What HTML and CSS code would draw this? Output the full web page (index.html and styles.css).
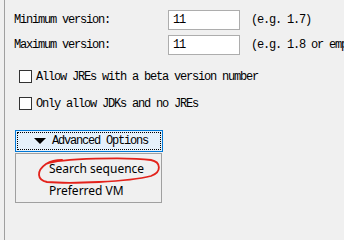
FILE: index.html
```html
<!DOCTYPE html>
<html lang="en">
<head>
  <meta charset="UTF-8" />
  <title>Java version</title>
  <link rel="stylesheet" href="styles.css">
</head>
<body>

  <div class="panel">
    <div class="versions">
      <div class="version-row">
        <span class="label">Minimum version:</span>
        <input class="field" type="text" value="11" />
        <span class="hint">(e.g. 1.7)</span>
      </div>
      <div class="version-row">
        <span class="label">Maximum version:</span>
        <input class="field" type="text" value="11" />
        <span class="hint">(e.g. 1.8 or empty)</span>
      </div>
    </div>

    <label class="check-row first">
      <input type="checkbox" class="check" />
      <span>Allow JREs with a beta version number</span>
    </label>
    <label class="check-row">
      <input type="checkbox" class="check" />
      <span>Only allow JDKs and no JREs</span>
    </label>

    <div class="advanced">
      <button class="adv-btn"><span class="arrow"></span>Advanced Options</button>
      <div class="menu">
        <div class="menu-item">Search sequence</div>
        <div class="menu-item">Preferred VM</div>
      </div>
    </div>
  </div>

  <!-- hand drawn mark on top of the screenshot -->
  <svg class="scribble" width="344" height="240" viewBox="0 0 344 240">
    <path d="M46 164 C60 158 130 157 151 160 C161 162 162 172 151 176 C128 182 70 184 47 182 C37 180 36 171 46 164 C51 161 57 160 62 160"
          fill="none" stroke="#e3221b" stroke-width="1.8" stroke-linecap="round" />
  </svg>

</body>
</html>
```

FILE: styles.css
```css
body {
  margin: 0;
  width: 344px;
  height: 240px;
  overflow: hidden;
  background: #f0f0f0;
  font-family: "Liberation Mono", monospace;
  font-size: 12px;
  letter-spacing: -1.2px;
  color: #000;
  position: relative;
}
.panel {
  margin-left: 4px;
  height: 240px;
  border-left: 1px solid #a0a0a0;
  padding-left: 9px;
}
.versions {
  padding-top: 10px;
  display: flex;
  flex-direction: column;
  gap: 5px;
}
.version-row {
  display: flex;
  align-items: center;
  height: 20px;
  white-space: nowrap;
}
.label {
  width: 154px;
  flex: none;
}
.field {
  box-sizing: border-box;
  width: 72px;
  height: 20px;
  margin: 0;
  padding: 0 4px;
  border: 1px solid #adadad;
  background: #fff;
  font: inherit;
  letter-spacing: inherit;
  color: #000;
  outline: none;
}
.hint {
  margin-left: 11px;
}
.check-row {
  display: flex;
  align-items: center;
  height: 13px;
  margin-top: 14px;
  padding-left: 5px;
  white-space: nowrap;
}
.check-row.first {
  margin-top: 15px;
}
.check {
  appearance: none;
  box-sizing: border-box;
  width: 13px;
  height: 13px;
  margin: 0 4px 0 0;
  border: 1px solid #333;
  background: #fff;
}
.advanced {
  margin-top: 20px;
  margin-left: 1px;
}
.adv-btn {
  box-sizing: border-box;
  display: flex;
  align-items: center;
  width: 148px;
  height: 22px;
  padding: 0 0 0 18px;
  border: 1px solid #0078d7;
  background: #e5f1fb;
  outline: 1px dotted #000;
  outline-offset: -3px;
  font: inherit;
  letter-spacing: inherit;
  color: #000;
}
.arrow {
  width: 0;
  height: 0;
  border-left: 6px solid transparent;
  border-right: 6px solid transparent;
  border-top: 6px solid #000;
  margin-right: 6px;
}
.menu {
  box-sizing: border-box;
  width: 147px;
  height: 50px;
  margin-top: 1px;
  border: 1px solid #a0a0a0;
  padding-top: 5px;
  font-family: "Noto Sans", sans-serif;
  font-size: 12px;
  letter-spacing: 0;
}
.menu-item {
  height: 22px;
  line-height: 20px;
  padding-left: 33px;
}
.scribble {
  position: absolute;
  left: 0;
  top: 0;
  pointer-events: none;
}
```
